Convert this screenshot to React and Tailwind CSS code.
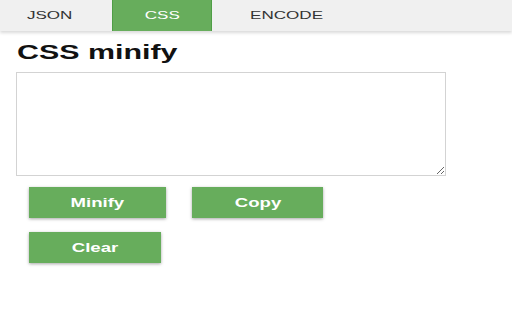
import React from 'react';

const tabs = [
  { label: 'JSON', width: 'w-[112px] pr-[12px]' },
  { label: 'CSS', width: 'w-[100px]', active: true },
  { label: 'ENCODE', width: 'w-[150px]' },
];

function Button({ children, width }) {
  return (
    <button
      className={`${width} h-[31px] flex items-center justify-center bg-[#67ad5c] text-white text-[12px] font-bold shadow-[0_1px_3px_rgba(0,0,0,0.35)]`}
    >
      <span className="inline-block scale-x-[1.55]">{children}</span>
    </button>
  );
}

export default function App() {
  return (
    <div className="w-[512px] h-[320px] bg-white overflow-hidden font-['Liberation_Sans',Arial,sans-serif]">
      {/* Tabs */}
      <div className="flex h-[31px] bg-[#f0f0f0] shadow-[0_2px_3px_rgba(0,0,0,0.15)]">
        {tabs.map((tab) => (
          <div
            key={tab.label}
            className={`${tab.width} flex items-center justify-center text-[11px] ${
              tab.active
                ? 'bg-[#67ad5c] text-white border-x border-[#4f9e46]'
                : 'text-[#333]'
            }`}
          >
            <span className="inline-block scale-x-[1.55]">{tab.label}</span>
          </div>
        ))}
      </div>

      {/* Content */}
      <div className="pl-[16px]">
        <h1 className="mt-[9px] pl-[1px] text-[20px] leading-6 font-bold text-[#111]">
          <span className="inline-block origin-left scale-x-[1.52]">CSS minify</span>
        </h1>
        <textarea className="block mt-[8px] w-[430px] h-[104px] border border-[#d3d3d3] bg-white outline-none" />
        <div className="pl-[13px] mt-[11px] flex flex-col gap-[14px]">
          <div className="flex gap-[26px]">
            <Button width="w-[137px]">Minify</Button>
            <Button width="w-[131px]">Copy</Button>
          </div>
          <Button width="w-[132px]">Clear</Button>
        </div>
      </div>
    </div>
  );
}
